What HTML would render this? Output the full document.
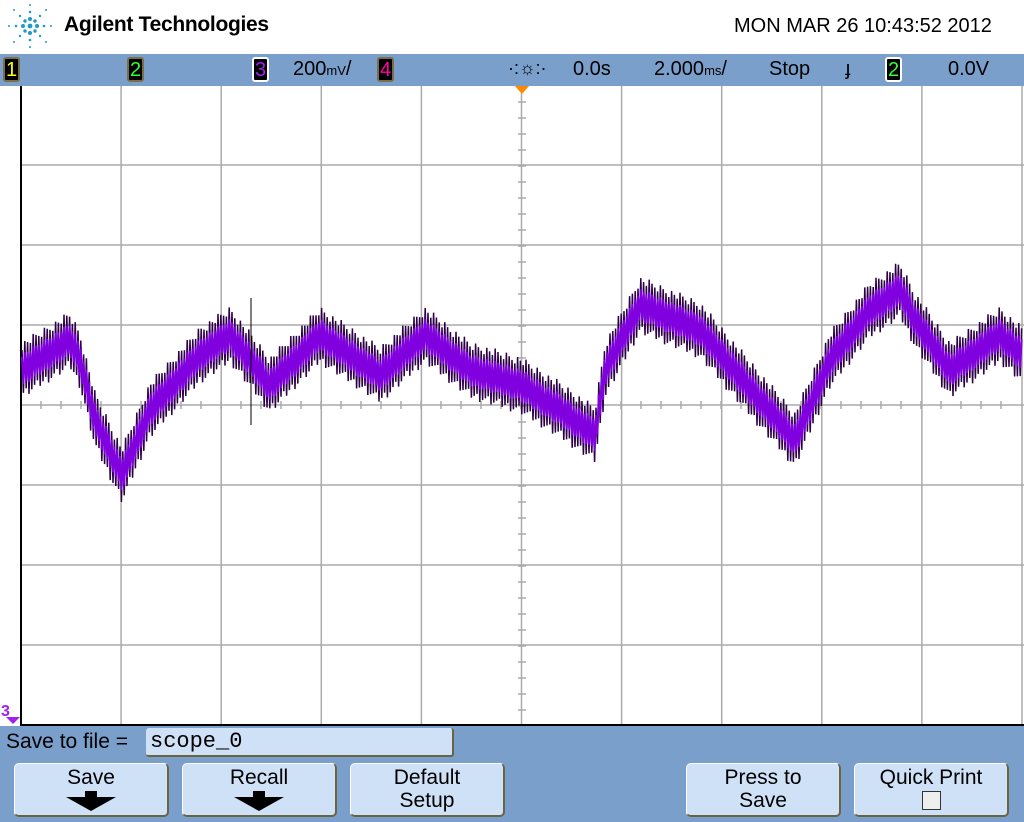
<!DOCTYPE html>
<html><head><meta charset="utf-8"><style>
*{margin:0;padding:0;box-sizing:border-box}
body{width:1024px;height:822px;overflow:hidden;background:#fff;font-family:"Liberation Sans",sans-serif;position:relative}
.abs{position:absolute}
#bar{left:0;top:54px;width:1024px;height:32px;background:#7b9fcb}
.ch{position:absolute;top:3px;width:17px;height:25px;background:#000;border:2px solid #7a6f48;border-radius:3px;font-size:20px;text-align:center;line-height:22px}
.t{position:absolute;top:4px;font-size:20px;color:#000}
#bot{left:0;top:726px;width:1024px;height:96px;background:#7b9fcb;overflow:hidden}
.btn{position:absolute;top:37px;width:155px;height:54px;background:#cfe1f7;border-radius:5px;border:1px solid #fff;border-right:2px solid #6b6340;border-bottom:2px solid #6b6340;text-align:center;font-size:21px;line-height:23px;padding-top:2px}
.arr{display:block;margin:2px auto 0;}
</style></head><body>
<svg class="abs" style="left:4px;top:2px" width="52" height="48" viewBox="0 0 52 48">
<g fill="#1f9ac7">
<circle cx="26" cy="24" r="2.4"/>
<circle cx="19" cy="24" r="2"/><circle cx="33" cy="24" r="2"/><circle cx="26" cy="17" r="2"/><circle cx="26" cy="31" r="2"/>
<circle cx="21" cy="19" r="1.7"/><circle cx="31" cy="19" r="1.7"/><circle cx="21" cy="29" r="1.7"/><circle cx="31" cy="29" r="1.7"/>
<circle cx="12" cy="24" r="1.3"/><circle cx="40" cy="24" r="1.3"/><circle cx="26" cy="10" r="1.3"/><circle cx="26" cy="38" r="1.3"/>
<circle cx="16" cy="14" r="1.2"/><circle cx="36" cy="14" r="1.2"/><circle cx="16" cy="34" r="1.2"/><circle cx="36" cy="34" r="1.2"/>
<circle cx="5" cy="24" r="1"/><circle cx="47" cy="24" r="1"/><circle cx="26" cy="3" r="1"/><circle cx="26" cy="45" r="1"/>
<circle cx="10" cy="8" r="1"/><circle cx="42" cy="8" r="1"/><circle cx="10" cy="40" r="1"/><circle cx="42" cy="40" r="1"/>
</g></svg>
<div class="abs" style="left:64px;top:13px;font-size:21px;font-weight:bold;letter-spacing:-0.3px">Agilent Technologies</div>
<div class="abs" style="left:734px;top:15px;font-size:20px">MON MAR 26 10:43:52 2012</div>
<div id="bar" class="abs">
<div class="ch" style="left:3px;color:#ff0">1</div>
<div class="ch" style="left:127px;color:#3f3">2</div>
<div class="ch" style="left:252px;color:#a020f0;border-color:#fff">3</div>
<div class="t" style="left:293px">200<span style="font-size:13px">mV</span>/</div>
<div class="ch" style="left:377px;color:#f0a">4</div>
<div class="t" style="left:508px;font-size:18px">·:☼:·</div>
<div class="t" style="left:573px">0.0s</div>
<div class="t" style="left:654px">2.000<span style="font-size:13px">ms</span>/</div>
<div class="t" style="left:769px">Stop</div>
<div class="t" style="left:845px">ɟ</div>
<div class="ch" style="left:885px;color:#3f3;border-color:#fff">2</div>
<div class="t" style="left:948px">0.0V</div>
</div>
<svg class="abs" style="left:0;top:86px" width="1024" height="640" id="g">
<g stroke="#aaa" stroke-width="1.5" id="grid"></g>
<line x1="21" y1="0" x2="21" y2="640" stroke="#000" stroke-width="2"/>
<line x1="21" y1="639" x2="1024" y2="639" stroke="#000" stroke-width="2"/>
<polygon points="515,0 529,0 522,8" fill="#f80"/>
<text x="1" y="630" fill="#a020f0" font-size="16" font-weight="bold" font-family="Liberation Sans">3</text>
<polygon points="6,631 20,631 13,638" fill="#a020f0"/>
<g id="w"></g>
<line x1="251" y1="212" x2="251" y2="339" stroke="#000" stroke-width="1"/>
</svg>
<div id="bot" class="abs">
<div class="abs" style="left:6px;top:4px;font-size:21px">Save to file =</div>
<div class="abs" style="left:146px;top:2px;width:308px;height:29px;background:#cfe1f7;border-radius:3px;border-right:2px solid #6b6340;border-bottom:2px solid #6b6340;font-family:'Liberation Mono',monospace;font-size:22px;padding-left:4px;line-height:27px">scope_0</div>
<div class="btn" style="left:14px">Save<svg class="arr" width="50" height="20"><polygon points="19,0 31,0 31,6 50,6 25,20 0,6 19,6" fill="#000"/></svg></div>
<div class="btn" style="left:182px">Recall<svg class="arr" width="50" height="20"><polygon points="19,0 31,0 31,6 50,6 25,20 0,6 19,6" fill="#000"/></svg></div>
<div class="btn" style="left:350px">Default<br>Setup</div>
<div class="btn" style="left:686px">Press to<br>Save</div>
<div class="btn" style="left:854px">Quick Print<br><span style="display:inline-block;width:19px;height:19px;border:1px solid #333;background:#eee;margin-top:2px"></span></div>
</div>
<script>
var g=document.getElementById("grid"),s="";
for(var i=1;i<=10;i++){var x=21+i*100.1;s+='<line x1="'+x+'" y1="0" x2="'+x+'" y2="640"/>';}
for(var j=1;j<8;j++){var y=j*80-1;s+='<line x1="21" y1="'+y+'" x2="1024" y2="'+y+'"/>';}
for(var k=0;k<50;k++){var ty=k*16;s+='<line x1="518" y1="'+ty+'" x2="526" y2="'+ty+'"/>';var tx=21+k*20;s+='<line x1="'+tx+'" y1="315" x2="'+tx+'" y2="323"/>';}
g.innerHTML=s;
var P=[[22,284],[70,254],[80,274],[95,334],[122,389],[150,324],[200,269],[230,249],[270,299],[320,249],[380,289],[425,249],[470,284],[520,299],[560,324],[595,349],[605,284],[640,219],[700,244],[760,314],[795,354],[830,274],[870,224],[900,204],[915,234],[950,284],[1000,249],[1022,269]];
function cy(x){for(var i=0;i<P.length-1;i++){if(x<=P[i+1][0]){var t=(x-P[i][0])/(P[i+1][0]-P[i][0]);return P[i][1]+t*(P[i+1][1]-P[i][1]);}}return P[P.length-1][1];}
var d1="",d2="";
for(var x=22,n=0;x<=1022;x+=1.4,n++){var c=cy(x),sg=(n%2?1:-1),r=((n*37)%11)/11;
d1+=(n?"L":"M")+x.toFixed(1)+","+(c+sg*(20+r*10)).toFixed(1);
d2+=(n?"L":"M")+x.toFixed(1)+","+(c+sg*(13+r*4)).toFixed(1);}
document.getElementById("w").innerHTML='<path d="'+d1+'" stroke="#2e0048" stroke-width="1.5" fill="none"/><path d="'+d2+'" stroke="#8000e0" stroke-width="2" fill="none"/>';
</script>
</body></html>
